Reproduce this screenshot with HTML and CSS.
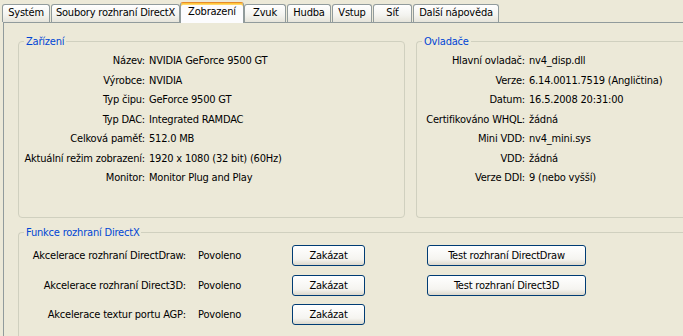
FILE: index.html
```html
<!DOCTYPE html>
<html lang="cs">
<head>
<meta charset="UTF-8" />
<title>Diagnostika DirectX - Zobrazení</title>
<link rel="stylesheet" href="styles.css">
</head>
<body>

<div class="tabs">
  <div class="tab t-system">Systém</div>
  <div class="tab t-files">Soubory rozhraní DirectX</div>
  <div class="tab t-display active">Zobrazení</div>
  <div class="tab t-sound">Zvuk</div>
  <div class="tab t-music">Hudba</div>
  <div class="tab t-input">Vstup</div>
  <div class="tab t-net">Síť</div>
  <div class="tab t-help">Další nápověda</div>
</div>

<div class="panel">
  <div class="top-groups">
    <fieldset class="group device">
      <legend>Zařízení</legend>
      <div class="props">
        <span class="key">Název:</span><span>NVIDIA GeForce 9500 GT</span>
        <span class="key">Výrobce:</span><span>NVIDIA</span>
        <span class="key">Typ čipu:</span><span>GeForce 9500 GT</span>
        <span class="key">Typ DAC:</span><span>Integrated RAMDAC</span>
        <span class="key">Celková paměť:</span><span>512.0 MB</span>
        <span class="key">Aktuální režim zobrazení:</span><span>1920 x 1080 (32 bit) (60Hz)</span>
        <span class="key">Monitor:</span><span>Monitor Plug and Play</span>
      </div>
    </fieldset>

    <fieldset class="group drivers">
      <legend>Ovladače</legend>
      <div class="props">
        <span class="key">Hlavní ovladač:</span><span>nv4_disp.dll</span>
        <span class="key">Verze:</span><span>6.14.0011.7519 (Angličtina)</span>
        <span class="key">Datum:</span><span>16.5.2008 20:31:00</span>
        <span class="key">Certifikováno WHQL:</span><span>žádná</span>
        <span class="key">Mini VDD:</span><span>nv4_mini.sys</span>
        <span class="key">VDD:</span><span>žádná</span>
        <span class="key">Verze DDI:</span><span>9 (nebo vyšší)</span>
      </div>
    </fieldset>
  </div>

  <fieldset class="group features">
    <legend>Funkce rozhraní DirectX</legend>
    <div class="feature-grid">
      <span class="key">Akcelerace rozhraní DirectDraw:</span>
      <span class="state">Povoleno</span>
      <button class="btn btn-small">Zakázat</button>
      <button class="btn btn-test">Test rozhraní DirectDraw</button>

      <span class="key">Akcelerace rozhraní Direct3D:</span>
      <span class="state">Povoleno</span>
      <button class="btn btn-small">Zakázat</button>
      <button class="btn btn-test">Test rozhraní Direct3D</button>

      <span class="key">Akcelerace textur portu AGP:</span>
      <span class="state">Povoleno</span>
      <button class="btn btn-small">Zakázat</button>
      <span></span>
    </div>
  </fieldset>
</div>

</body>
</html>
```

FILE: styles.css
```css
/* Base */
*, *::before, *::after {
  box-sizing: border-box;
}

body {
  margin: 0;
  background: #ece9d8;
  color: #000;
  font-family: "DejaVu Sans Condensed", "Liberation Sans", sans-serif;
  font-size: 11px;
  letter-spacing: -0.2px;
  line-height: 13px;
  width: 683px;
  height: 336px;
  overflow: hidden;
}

/* Tab strip */
.tabs {
  display: flex;
  align-items: flex-end;
  gap: 1px;
  height: 22px;
  padding-left: 2px;
}

.tab {
  height: 18px;
  line-height: 16px;
  text-align: center;
  white-space: nowrap;
  border: 1px solid #919b9c;
  border-bottom: none;
  border-radius: 3px 3px 0 0;
  background: linear-gradient(#ffffff, #f3f3ef 60%, #e6e4da);
}

.tab.active {
  position: relative;
  z-index: 1;
  height: 21px;
  margin-bottom: -1px;
  margin-left: -1px;
  margin-right: -1px;
  line-height: 18px;
  background: #fcfcfe;
  border-top: 1px solid #e68b2c;
  box-shadow: inset 0 1px 0 #ffc73c, inset 0 2px 0 #ffd76a;
}

.t-system  { width: 48px; }
.t-files   { width: 129px; }
.t-display { width: 64px; }
.t-sound   { width: 42px; }
.t-music   { width: 44px; }
.t-input   { width: 40px; }
.t-net     { width: 39px; }
.t-help    { width: 86px; }

/* Tab page: its right and bottom edges lie outside the shot */
.panel {
  display: flex;
  flex-direction: column;
  margin-left: 3px;
  height: 314px;
  border: 1px solid #919b9c;
  border-right: none;
  border-bottom: none;
  padding: 12px 0 0 14px;
}

.top-groups {
  display: flex;
  gap: 11px;
}

/* Group boxes */
.group {
  margin: 0;
  padding: 0;
  min-width: 0;
  border: 1px solid #d0d0bf;
  border-radius: 4px;
}

.group legend {
  margin-left: 5px;
  padding: 0 2px;
  color: #0046d5;
  line-height: 13px;
}

.device {
  width: 387px;
  height: 183px;
}

.drivers {
  flex: 1;
  height: 183px;
  border-right: none;
  border-radius: 4px 0 0 4px;
}

.props {
  display: grid;
  grid-auto-rows: 19.5px;
  align-items: center;
  column-gap: 4px;
  padding-top: 3px;
  white-space: nowrap;
}

.device .props {
  grid-template-columns: 126px auto;
}

.drivers .props {
  grid-template-columns: 108px auto;
}

.key {
  text-align: right;
}

/* DirectX features */
.features {
  flex: 1;
  margin-top: 8px;
  border-right: none;
  border-bottom: none;
  border-radius: 4px 0 0 0;
}

.feature-grid {
  display: grid;
  grid-template-columns: 167px 106px 73px auto;
  grid-auto-rows: 29.5px;
  align-items: center;
  padding-top: 2px;
  white-space: nowrap;
}

.state {
  padding-left: 12px;
}

/* Buttons */
.btn {
  height: 21px;
  padding: 0;
  font: inherit;
  letter-spacing: inherit;
  color: #000;
  border: 1px solid #003c74;
  border-radius: 3px;
  background: linear-gradient(#ffffff, #f5f4f0 70%, #dcd8cc);
}

.btn-small {
  width: 73px;
}

.btn-test {
  width: 159px;
  margin-left: 62px;
}
```
